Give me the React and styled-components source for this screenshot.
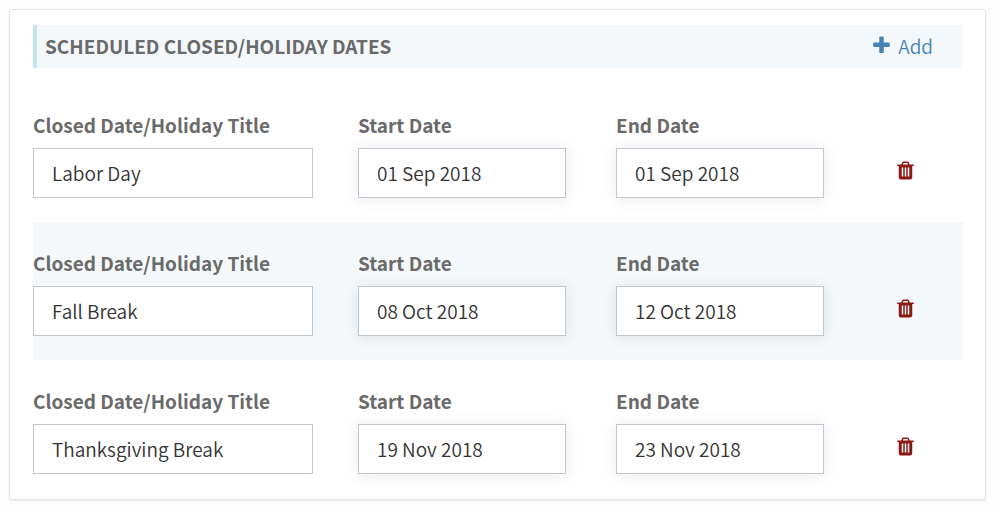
import React, { useState } from "react";
import styled, { createGlobalStyle } from "styled-components";

const GlobalStyle = createGlobalStyle`
  *, *::before, *::after { box-sizing: border-box; }
  body {
    margin: 0;
    padding: 9px 14px 10px 9px;
    background: #fdfdfd;
    color: #333;
    font-family: "Source Sans Pro", "Noto Sans CJK SC", sans-serif;
    font-size: 19px;
    font-weight: 350;
    line-height: 24px;
  }
`;

const Card = styled.section`
  padding: 15px 22px 1px 23px;
  background: #fff;
  border: 1px solid #e3e3e3;
  border-radius: 3px;
  box-shadow: 0 1px 2px rgba(0, 0, 0, 0.08);
`;

const Header = styled.header`
  display: flex;
  align-items: center;
  justify-content: space-between;
  height: 43px;
  margin-bottom: 16px;
  padding: 0 30px 2px 8px;
  background: #f4f8fb;
  border-left: 4px solid #bfe6ee;
`;

const Title = styled.h2`
  margin: 0;
  color: #6a6a6a;
  font-size: 19px;
  font-weight: 700;
  line-height: 24px;
  text-transform: uppercase;
`;

const IconButton = styled.button`
  display: inline-flex;
  align-items: center;
  gap: 6px;
  padding: 0;
  border: 0;
  background: none;
  color: ${(p) => p.$color};
  font: inherit;
  cursor: pointer;
`;

const Icon = styled.svg`
  width: 21px;
  height: 21px;
  fill: currentColor;
`;

const Row = styled.div`
  display: grid;
  grid-template-columns: 325fr 258fr 258fr 89fr;
  padding: 29px 0 24px;
  background: ${(p) => (p.$shaded ? "#f4f8fb" : "transparent")};
`;

const Field = styled.div`
  display: flex;
  flex-direction: column;
  gap: 11px;
  padding-right: ${(p) => (p.$date ? "50px" : "45px")};
`;

const Label = styled.label`
  color: #6a6a6a;
  font-weight: 700;
`;

const Input = styled.input`
  width: 100%;
  height: 50px;
  padding: 0 18px 2px;
  border: 1px solid #c1c5d1;
  border-radius: 0;
  background: #fff;
  box-shadow: ${(p) => (p.$raised ? "0 1px 14px rgba(0, 0, 0, 0.09)" : "none")};
  color: #333;
  font: inherit;
  outline: none;
`;

const Actions = styled.div`
  display: flex;
  align-items: flex-end;
  padding: 0 0 17px 21px;
`;

const PlusIcon = () => (
  <Icon viewBox="0 0 1792 1792" aria-hidden="true">
    <path d="M1600 736v192q0 40-28 68t-68 28h-416v416q0 40-28 68t-68 28h-192q-40 0-68-28t-28-68v-416h-416q-40 0-68-28t-28-68v-192q0-40 28-68t68-28h416v-416q0-40 28-68t68-28h192q40 0 68 28t28 68v416h416q40 0 68 28t28 68z" />
  </Icon>
);

const TrashIcon = () => (
  <Icon viewBox="0 0 1792 1792" aria-hidden="true">
    <path d="M704 1376v-704q0-14-9-23t-23-9h-64q-14 0-23 9t-9 23v704q0 14 9 23t23 9h64q14 0 23-9t9-23zm256 0v-704q0-14-9-23t-23-9h-64q-14 0-23 9t-9 23v704q0 14 9 23t23 9h64q14 0 23-9t9-23zm256 0v-704q0-14-9-23t-23-9h-64q-14 0-23 9t-9 23v704q0 14 9 23t23 9h64q14 0 23-9t9-23zm-544-992h448l-48-117q-7-9-17-11h-317q-10 2-17 11zm928 32v64q0 14-9 23t-23 9h-96v948q0 83-47 143.500t-113 60.500h-832q-66 0-113-58.500t-47-141.500v-952h-96q-14 0-23-9t-9-23v-64q0-14 9-23t23-9h309l70-167q15-37 54-63t79-26h320q40 0 79 26t54 63l70 167h309q14 0 23 9t9 23z" />
  </Icon>
);

const initialDates = [
  { id: 1, title: "Labor Day", start: "01 Sep 2018", end: "01 Sep 2018" },
  { id: 2, title: "Fall Break", start: "08 Oct 2018", end: "12 Oct 2018" },
  { id: 3, title: "Thanksgiving Break", start: "19 Nov 2018", end: "23 Nov 2018" },
];

const fields = [
  { key: "title", label: "Closed Date/Holiday Title", date: false },
  { key: "start", label: "Start Date", date: true },
  { key: "end", label: "End Date", date: true },
];

export default function App() {
  const [dates, setDates] = useState(initialDates);

  const add = () =>
    setDates((list) => [
      ...list,
      { id: Math.max(0, ...list.map((d) => d.id)) + 1, title: "", start: "", end: "" },
    ]);
  const remove = (id) => setDates((list) => list.filter((d) => d.id !== id));
  const update = (id, key, value) =>
    setDates((list) => list.map((d) => (d.id === id ? { ...d, [key]: value } : d)));

  return (
    <>
      <GlobalStyle />
      <Card>
        <Header>
          <Title>Scheduled Closed/Holiday Dates</Title>
          <IconButton type="button" $color="#4484b4" onClick={add}>
            <PlusIcon />
            Add
          </IconButton>
        </Header>
        {dates.map((item, index) => (
          <Row key={item.id} $shaded={index % 2 === 1}>
            {fields.map(({ key, label, date }) => (
              <Field key={key} $date={date}>
                <Label htmlFor={`${key}-${item.id}`}>{label}</Label>
                <Input
                  id={`${key}-${item.id}`}
                  type="text"
                  $raised={date}
                  value={item[key]}
                  onChange={(e) => update(item.id, key, e.target.value)}
                />
              </Field>
            ))}
            <Actions>
              <IconButton
                type="button"
                $color="#8b1a14"
                aria-label="Delete"
                onClick={() => remove(item.id)}
              >
                <TrashIcon />
              </IconButton>
            </Actions>
          </Row>
        ))}
      </Card>
    </>
  );
}
